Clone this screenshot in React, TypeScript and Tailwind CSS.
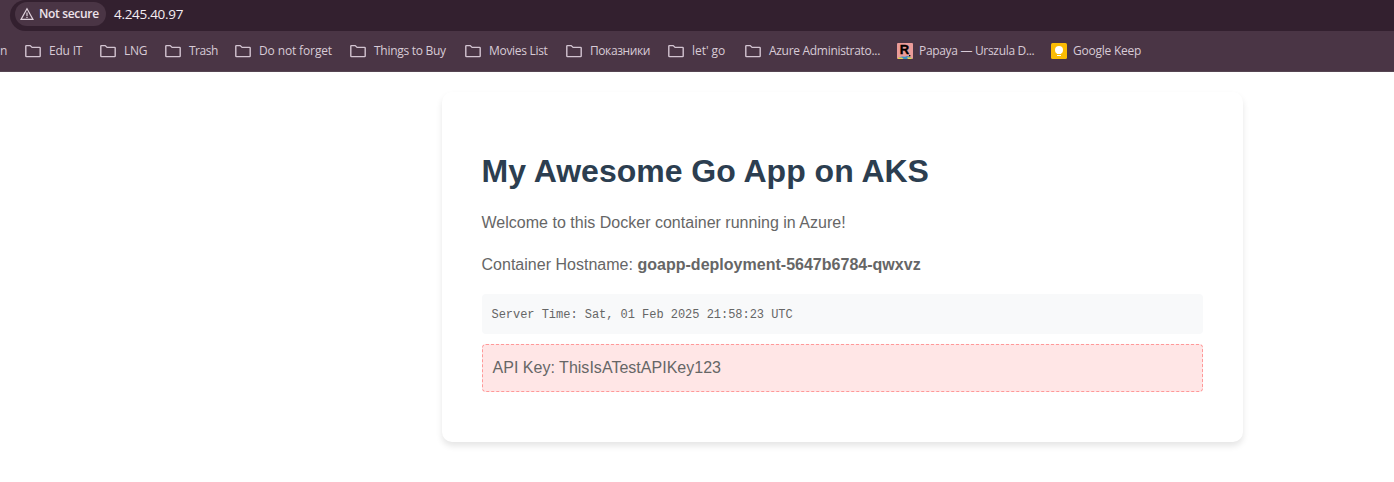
type Bookmark = { label: string; width: string; text: string; kind?: 'papaya' | 'keep' };

const bookmarks: Bookmark[] = [
  { label: 'Edu IT', width: 'w-[75px]', text: 'tracking-[-0.2px]' },
  { label: 'LNG', width: 'w-[65px]', text: 'tracking-[-0.3px]' },
  { label: 'Trash', width: 'w-[70px]', text: 'tracking-[-0.5px]' },
  { label: 'Do not forget', width: 'w-[115px]', text: 'tracking-[-0.13px]' },
  { label: 'Things to Buy', width: 'w-[115px]', text: 'tracking-[-0.28px]' },
  { label: 'Movies List', width: 'w-[101px]', text: 'tracking-[-0.3px]' },
  { label: 'Показники', width: 'w-[102px]', text: 'tracking-[-0.42px]' },
  { label: "let' go", width: 'w-[77px]', text: 'tracking-[-0.05px]' },
  { label: 'Azure Administrato...', width: 'w-[152px]', text: 'tracking-[-0.3px]' },
  { label: 'Papaya — Urszula D...', width: 'w-[154px]', text: 'tracking-[-0.32px]', kind: 'papaya' },
  { label: 'Google Keep', width: 'w-[110px]', text: 'tracking-[-0.23px]', kind: 'keep' },
];

function FolderIcon() {
  return (
    <svg className="h-4 w-4 shrink-0" viewBox="0 0 16 16" fill="none" stroke="#d3c4d1" strokeWidth="1.4">
      <path d="M.8 12.9V3.2q0-.6.6-.6h3.8l1.9 1.8h7.4q.7 0 .7.7v7.8q0 .7-.7.7H1.5q-.7 0-.7-.7z" />
    </svg>
  );
}

function PapayaIcon() {
  return (
    <span className="relative flex h-4 w-4 shrink-0 items-center justify-center overflow-hidden rounded-[1px] bg-[#eb9b99]">
      <span className="-mt-[3px] -ml-px font-['Liberation_Sans'] text-[13px] leading-none font-bold text-black [-webkit-text-stroke:0.4px_black]">R</span>
      <svg className="absolute inset-0" viewBox="0 0 16 16">
        <path d="M1 16l1-1.6 3-.9 3 .3 2-.8 3 .5 2 2.5z" fill="#3b8fc4" />
        <path d="M1 14.6h4l1.5 1.4H1zM10 14.3l4 .2 1 1.5h-4z" fill="#e8d04c" />
        <path d="M12 12h1.4v1.2H12z" fill="#000" />
      </svg>
    </span>
  );
}

function KeepIcon() {
  return (
    <svg className="h-4 w-4 shrink-0" viewBox="0 0 16 16">
      <rect width="16" height="16" rx="1.5" fill="#fbbc04" />
      <circle cx="8" cy="7" r="4" fill="#fff" />
      <path d="M6 9h4v2H6zM6 12h4v1H6z" fill="#fff" />
    </svg>
  );
}

function BookmarkIcon({ kind }: { kind?: Bookmark['kind'] }) {
  if (kind === 'papaya') return <PapayaIcon />;
  if (kind === 'keep') return <KeepIcon />;
  return <FolderIcon />;
}

export default function App() {
  return (
    <div className="h-[482px] overflow-hidden bg-white font-['Liberation_Sans',Arial,sans-serif]">
      <header className="h-[72px] border-b border-[#564552] bg-[#4a3545] font-['Open_Sans','Noto_Sans',sans-serif]">
        <div className="ml-[10px] flex h-[31px] items-center rounded-l-full bg-[#33202f] pb-[3px] pl-[5px]">
          <div className="flex h-6 w-[91px] items-center gap-[5px] rounded-full bg-[#4a3545] pl-[5px]">
            <svg className="h-[14px] w-[14px] shrink-0" viewBox="0 0 14 14" fill="none" stroke="#e0d2dd" strokeWidth="1.2">
              <path d="M7 1.8L13 12.4H1z" />
              <path d="M7 5.4v3.5M7 9.8v1.3" />
            </svg>
            <span className="text-[12px] font-semibold tracking-[-0.33px] whitespace-nowrap text-[#eee3eb]">Not secure</span>
          </div>
          <span className="ml-2 text-[13.5px] tracking-[-0.3px] text-[#f4edf2]">4.245.40.97</span>
        </div>
        <nav className="flex h-10 items-center text-[12px] text-[#d8cbd6]">
          <span className="w-[25px] whitespace-nowrap">n</span>
          {bookmarks.map((b) => (
            <a key={b.label} className={`flex shrink-0 items-center ${b.kind ? 'gap-[6px]' : 'gap-2'} ${b.width}`}>
              <BookmarkIcon kind={b.kind} />
              <span className={`whitespace-nowrap ${b.text}`}>{b.label}</span>
            </a>
          ))}
        </nav>
      </header>
      <main className="mt-5 ml-[442px] h-[350px] w-[801px] rounded-[10px] bg-white px-10 pt-[54px] text-[16px] text-[#666] shadow-[0_4px_6px_rgba(0,0,0,0.1)]">
        <h1 className="-ml-[0.5px] text-[32px] leading-[51px] font-bold text-[#2c3e50]">My Awesome Go App on AKS</h1>
        <p className="mt-[13px] -ml-[0.5px] leading-[26px] tracking-[0.015px]">Welcome to this Docker container running in Azure!</p>
        <p className="mt-4 -ml-[0.5px] leading-[26px] tracking-[0.015px]">
          Container Hostname: <strong>goapp-deployment-5647b6784-qwxvz</strong>
        </p>
        <div className="mt-4 flex h-10 items-center rounded-[4px] bg-[#f8f9fa] px-[9.5px] pt-0.5 font-['Liberation_Mono',monospace] text-[12px] tracking-[-0.03px]">
          Server Time: Sat, 01 Feb 2025 21:58:23 UTC
        </div>
        <div className="mt-[10px] h-12 rounded-[4px] border border-dashed border-[#ff9999] bg-[#ffe6e6] px-[9.5px] pt-[10px] leading-[26px] tracking-[0.02px]">
          API Key: ThisIsATestAPIKey123
        </div>
      </main>
    </div>
  );
}
